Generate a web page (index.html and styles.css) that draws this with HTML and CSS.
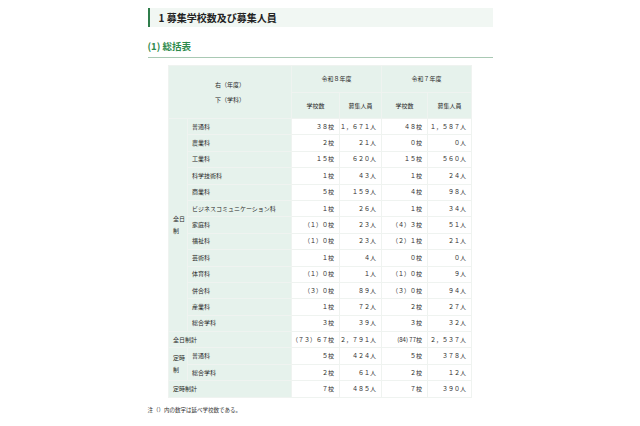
FILE: index.html
```html
<!DOCTYPE html>
<html lang="ja">
<head>
<meta charset="utf-8">
<title>募集学校数及び募集人員</title>
<link rel="stylesheet" href="styles.css">
</head>
<body>
<main class="page">
  <h1 class="sec-title">1 募集学校数及び募集人員</h1>
  <h2 class="sub-title">(1) 総括表</h2>
  <table class="summary">
    <colgroup>
      <col class="c-cat"><col class="c-sub"><col class="c-n1"><col class="c-n2"><col class="c-n3"><col class="c-n4">
    </colgroup>
    <thead>
      <tr class="hr1">
        <th colspan="2" rowspan="2" class="corner"><span>右（年度）</span><span>下（学科）</span></th>
        <th colspan="2">令和８年度</th>
        <th colspan="2">令和７年度</th>
      </tr>
      <tr class="hr2">
        <th>学校数</th><th>募集人員</th><th>学校数</th><th>募集人員</th>
      </tr>
    </thead>
    <tbody>
      <tr><th rowspan="13" class="cat">全日制</th><th class="sub">普通科</th><td>３８校</td><td>１，６７１人</td><td>４８校</td><td>１，５８７人</td></tr>
      <tr><th class="sub">農業科</th><td>２校</td><td>２１人</td><td>０校</td><td>０人</td></tr>
      <tr><th class="sub">工業科</th><td>１５校</td><td>６２０人</td><td>１５校</td><td>５６０人</td></tr>
      <tr><th class="sub">科学技術科</th><td>１校</td><td>４３人</td><td>１校</td><td>２４人</td></tr>
      <tr><th class="sub">商業科</th><td>５校</td><td>１５９人</td><td>４校</td><td>９８人</td></tr>
      <tr><th class="sub">ビジネスコミュニケーション科</th><td>１校</td><td>２６人</td><td>１校</td><td>３４人</td></tr>
      <tr><th class="sub">家庭科</th><td>（１）０校</td><td>２３人</td><td>（４）３校</td><td>５１人</td></tr>
      <tr><th class="sub">福祉科</th><td>（１）０校</td><td>２３人</td><td>（２）１校</td><td>２１人</td></tr>
      <tr><th class="sub">芸術科</th><td>１校</td><td>４人</td><td>０校</td><td>０人</td></tr>
      <tr><th class="sub">体育科</th><td>（１）０校</td><td>１人</td><td>（１）０校</td><td>９人</td></tr>
      <tr><th class="sub">併合科</th><td>（３）０校</td><td>８９人</td><td>（３）０校</td><td>９４人</td></tr>
      <tr><th class="sub">産業科</th><td>１校</td><td>７２人</td><td>２校</td><td>２７人</td></tr>
      <tr><th class="sub">総合学科</th><td>３校</td><td>３９人</td><td>３校</td><td>３２人</td></tr>
      <tr><th colspan="2" class="total">全日制計</th><td>（７３）６７校</td><td>２，７９１人</td><td>(84) 77校</td><td>２，５３７人</td></tr>
      <tr><th rowspan="2" class="cat">定時制</th><th class="sub">普通科</th><td>５校</td><td>４２４人</td><td>５校</td><td>３７８人</td></tr>
      <tr><th class="sub">総合学科</th><td>２校</td><td>６１人</td><td>２校</td><td>１２人</td></tr>
      <tr><th colspan="2" class="total">定時制計</th><td>７校</td><td>４８５人</td><td>７校</td><td>３９０人</td></tr>
    </tbody>
  </table>
  <p class="note">注（）内の数字は延べ学校数である。</p>
</main>
</body>
</html>
```
FILE: styles.css
```css
html, body {
  margin: 0;
  padding: 0;
  background: #ffffff;
}
body {
  font-family: "Noto Sans CJK JP", "Noto Sans", sans-serif;
  color: #333333;
}
.page {
  width: 345px;
  margin: 0 auto;
  padding-top: 8px;
}
.sec-title {
  margin: 0;
  padding: 3px 0 3px 9px;
  font-size: 10px;
  line-height: 13px;
  font-weight: 700;
  color: #222222;
  background: #f1f7f3;
  border-left: 2px solid #2f7d4b;
}
.sub-title {
  margin: 13px 0 0;
  padding: 0 0 4px;
  font-size: 9.5px;
  line-height: 13px;
  font-weight: 700;
  color: #2d8a4c;
  border-bottom: 1px solid #a9c9b4;
}
.summary {
  margin: 7px auto 0;
  width: 303px;
  table-layout: fixed;
  border-collapse: collapse;
  font-size: 6px;
  line-height: 8px;
  color: #2a2a2a;
}
.c-cat { width: 19px; }
.c-sub { width: 104px; }
.c-n1 { width: 48px; }
.c-n2 { width: 42px; }
.c-n3 { width: 46px; }
.c-n4 { width: 44px; }
.summary th,
.summary td {
  border: 1px solid #eff3f0;
  padding: 0;
  font-weight: 400;
}
.summary thead th {
  background: #e6f2ec;
  text-align: center;
  vertical-align: middle;
}
.hr1 { height: 27px; }
.hr2 { height: 26px; }
.corner span {
  display: block;
  line-height: 15px;
}
.corner {
  padding-bottom: 6px;
}
.summary tbody tr { height: 16.4px; }
.summary tbody th {
  background: #e6f2ec;
  text-align: left;
  vertical-align: middle;
  padding-left: 4px;
}
.summary .cat {
  padding-left: 4px;
  padding-right: 2px;
  line-height: 12px;
}
.summary td {
  background: #ffffff;
  text-align: right;
  padding-right: 5px;
  white-space: nowrap;
  vertical-align: middle;
}
.note {
  margin: 8px 0 0;
  font-size: 5.5px;
  line-height: 8px;
  color: #333333;
}
```
